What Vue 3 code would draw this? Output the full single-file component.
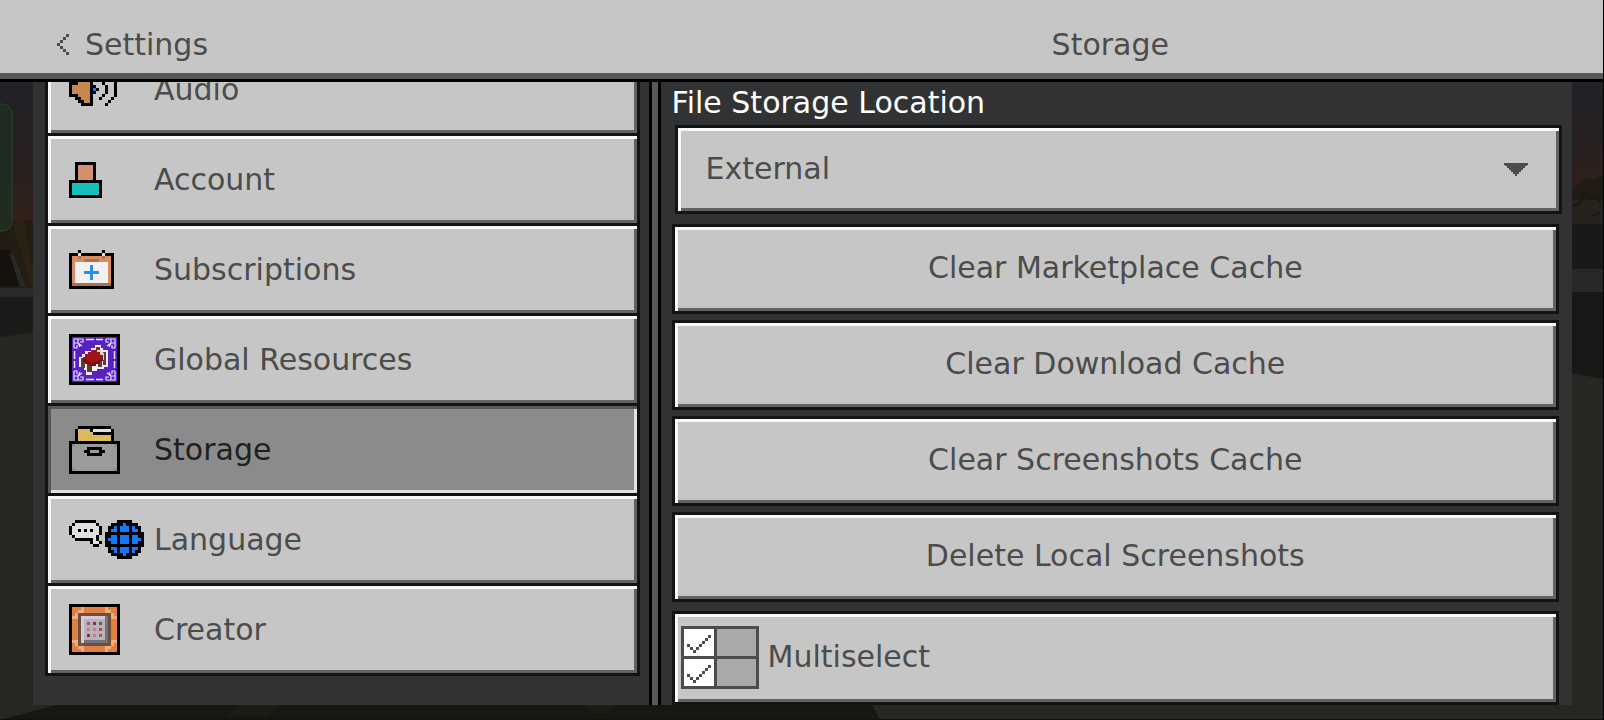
<script setup>
import { ref } from "vue";

const active = ref("Storage");
const location = ref("External");

// one letter per pixel, dots are transparent
const palette = {
  K: "#000000",
  W: "#f2f2f2",
  w: "#e0e0e0",
  S: "#d4906c",
  T: "#17bdbb",
  O: "#d88d62",
  o: "#b0714a",
  B: "#2a8fee",
  U: "#1778f5",
  C: "#c6884f",
  Y: "#dcb95f",
  G: "#9b9b9b",
  g: "#8b8b8b",
  R: "#df8042",
  L: "#efaa7d",
  N: "#6f4e3c",
  P: "#d3ccd6",
  p: "#b9b1bd",
  D: "#77717e",
  1: "#a35763",
  2: "#982a36",
  3: "#4b7235",
  4: "#b98f4f",
  5: "#c58284",
  6: "#c0444a",
  M: "#4c4c4c",
  F: "#ffffff",
  f: "#a9a9a9",
};

const icons = {
  Audio: [
    "....KKKK....K...",
    "...KKCCK.....K..",
    "..KKCCCK..K...K.",
    "KKKCCCCK...K...K",
    "KCCCCCCKK...K..K",
    "KCCCCCCKUK..K..K",
    "KCCCCCCKK...K..K",
    "KKKCCCCK...K...K",
    "..KKCCCK..K...K.",
    "...KKCCK.....K..",
    "....KKKK....K...",
  ],
  Account: [
    "..KKKKKKK..",
    "..KSSSSSK..",
    "..KSSSSSK..",
    "..KSSSSSK..",
    "..KSSSSSK..",
    "..KSSSSSK..",
    "KKKKKKKKKKK",
    "KTTTTTTTTTK",
    "KTTTTTTTTTK",
    "KTTTTTTTTTK",
    "KTTTTTTTTTK",
    "KKKKKKKKKKK",
  ],
  Subscriptions: [
    "...K.......K...",
    "KKKwKKKKKKKwKKK",
    "KOOoOOOOOOOoOOK",
    "KOOOOoooooOOOOK",
    "KOWWWWWWWWWWWOK",
    "KOWWWWWBWWWWWOK",
    "KOWWWWWBWWWWWOK",
    "KOWWWBBBBBWWWOK",
    "KOWWWWWBWWWWWOK",
    "KOWWWWWBWWWWWOK",
    "KOWWWWWWWWWWWOK",
    "KoooooooooooooK",
    "KKKKKKKKKKKKKKK",
  ],
  Storage: [
    "...KKKKKKKKKKK...",
    "..KYYYYKwwwwwwK..",
    "..KYYYYYKKKKKKK..",
    "..KYYYYYYYYYYYK..",
    "..KYYYYYYYYYYYK..",
    "KKKKKKKKKKKKKKKKK",
    "KgGGGGGGGGGGGGGgK",
    "KGGGGGKKKKKGGGGGK",
    "KGGGGKKGGGKKGGGGK",
    "KGGGGGKKKKKGGGGGK",
    "KGGGGGGGGGGGGGGGK",
    "KGGGGGGGGGGGGGGGK",
    "KGGGGGGGGGGGGGGGK",
    "KGGGGGGGGGGGGGGGK",
    "KgGGGGGGGGGGGGGgK",
    "KKKKKKKKKKKKKKKKK",
  ],
  Language: [
    "..KKKKKKK.......KKKKK....",
    ".KwwwwwwwK....KKKKUKKKK..",
    "KwwwwwwwwwK..KKUKUUUKUKK.",
    "KwwKwKwKwwK..KUUKUUUKUUK.",
    "KwwwwwwwwwK.KKKKKKKKKKKKK",
    ".KwwwwwwwK..KKUUKUUUKUUKK",
    "..KKKKKKwK..KUUUKUUUKUUUK",
    ".......KwwK.KKUUKUUUKUUKK",
    "........KK..KKKKKKKKKKKKK",
    ".............KUUKUUUKUUK.",
    ".............KKUKUUUKUKK.",
    "..............KKKKUKKKK..",
    "................KKKKK....",
  ],
  Creator: [
    "KKKKKKKKKKKKKKKKK",
    "KRRRLRRRRRRRLRRRK",
    "KRRLLRRRRRRRLLRRK",
    "KRLNNNNNNNNNNNLRK",
    "KLLNPPPPPPPPDNLLK",
    "KRRNPpppppppDNRRK",
    "KRRNPp1p2p3pDNRRK",
    "KRRNPpppppppDNRRK",
    "KRRNPp4p5p6pDNRRK",
    "KRRNPpppppppDNRRK",
    "KRRNPp2p5p1pDNRRK",
    "KRRNPpppppppDNRRK",
    "KLLNPDDDDDDDDNLLK",
    "KRLNNNNNNNNNNNLRK",
    "KRRLLRRRRRRRLLRRK",
    "KRRRLRRRRRRRLRRRK",
    "KKKKKKKKKKKKKKKKK",
  ],
  Multiselect: [
    "MMMMMMMMMMMMMMMMMMMMMMMMMM",
    "MFFFFFFFFFFMfffffffffffffM",
    "MFFFFFFFFFFMfffffffffffffM",
    "MFFFFFFFFMFMfffffffffffffM",
    "MFFFFFFFMFFMfffffffffffffM",
    "MFFFFFFMFFFMfffffffffffffM",
    "MFMFFFMFFFFMfffffffffffffM",
    "MFFMFMFFFFFMfffffffffffffM",
    "MFFFMFFFFFFMfffffffffffffM",
    "MFFFFFFFFFFMfffffffffffffM",
    "MMMMMMMMMMMMMMMMMMMMMMMMMM",
    "MFFFFFFFFFFMfffffffffffffM",
    "MFFFFFFFFFFMfffffffffffffM",
    "MFFFFFFFFMFMfffffffffffffM",
    "MFFFFFFFMFFMfffffffffffffM",
    "MFFFFFFMFFFMfffffffffffffM",
    "MFMFFFMFFFFMfffffffffffffM",
    "MFFMFMFFFFFMfffffffffffffM",
    "MFFFMFFFFFFMfffffffffffffM",
    "MFFFFFFFFFFMfffffffffffffM",
    "MMMMMMMMMMMMMMMMMMMMMMMMMM",
  ],
  Back: ["...M", "..M.", ".M..", "M...", ".M..", "..M.", "...M"],
};

const sections = ["Audio", "Account", "Subscriptions", "Global Resources", "Storage", "Language", "Creator"];
const actions = [
  "Clear Marketplace Cache",
  "Clear Download Cache",
  "Clear Screenshots Cache",
  "Delete Local Screenshots",
];

// joins neighbouring pixels of the same colour into one rect
function pixels(name) {
  const rects = [];
  icons[name].forEach((row, y) => {
    let x = 0;
    while (x < row.length) {
      let end = x + 1;
      while (row[end] === row[x]) end++;
      if (row[x] !== ".") {
        rects.push({ x, y, width: end - x, height: 1, fill: palette[row[x]] });
      }
      x = end;
    }
  });
  return rects;
}

function iconSize(name) {
  const w = icons[name][0].length;
  const h = icons[name].length;
  return { width: w * 3, height: h * 3, viewBox: `0 0 ${w} ${h}` };
}
</script>

<template>
  <div class="screen">
    <svg class="backdrop" viewBox="0 0 1604 720" preserveAspectRatio="none" aria-hidden="true">
      <defs>
        <linearGradient id="sky" x1="0" y1="0" x2="0" y2="1">
          <stop offset="0" stop-color="#222227" />
          <stop offset="0.5" stop-color="#272021" />
          <stop offset="1" stop-color="#32201a" />
        </linearGradient>
      </defs>
      <rect width="1604" height="720" fill="#282623" />
      <rect y="80" width="800" height="142" fill="url(#sky)" />
      <rect y="220" width="60" height="68" fill="#221c12" />
      <path d="M12 220h12l12 66h-6z" fill="#2b2112" />
      <path d="M0 250h10l12 36H0z" fill="#15120e" />
      <path d="M9 253l5 2 12 32h-6z" fill="#29292a" />
      <rect y="288" width="60" height="10" fill="#2b2a28" />
      <path d="M0 297h60v32L0 337z" fill="#1b1b19" />
      <rect x="-12" y="104" width="24" height="127" rx="10" fill="#1f2a21" stroke="#25472c" />
      <rect x="1500" y="80" width="104" height="120" fill="url(#sky)" />
      <path d="M1570 190l10-8 6-4 8 2 10-6v50h-34z" fill="#211b15" />
      <rect x="1570" y="200" width="34" height="24" fill="#26231e" />
      <path d="M1572 206l8-2 4-12 6 8 6-4 4 6M1592 216l8-3" fill="none" stroke="#1b1712" stroke-width="2" />
      <rect x="1500" y="224" width="104" height="45" fill="#1a1918" />
      <rect x="1500" y="269" width="104" height="23" fill="#2a2826" />
      <path d="M1500 292h104v87l-34-6h-70z" fill="#191816" />
      <path d="M60 704h812l8 16H0z" fill="#151810" />
      <path d="M240 704h40l-12 12h-40zM580 704h40l-20 10z" fill="#1a1d12" />
      <rect y="719" width="1604" height="1" fill="#170e10" />
      <rect x="1603" width="1" height="720" fill="#000000" />
    </svg>

    <header class="header">
      <button class="back" type="button">
        <svg v-bind="iconSize('Back')" shape-rendering="crispEdges" aria-hidden="true">
          <rect v-for="(p, i) in pixels('Back')" :key="i" v-bind="p" />
        </svg>
        <span>Settings</span>
      </button>
      <h1 class="title">Storage</h1>
    </header>

    <main class="body">
      <nav class="sidebar">
        <ul class="sections">
          <li v-for="name in sections" :key="name">
            <button
              class="section"
              :class="{ selected: name === active }"
              type="button"
              :aria-current="name === active ? 'page' : undefined"
              @click="active = name"
            >
              <span class="icon">
                <svg v-if="name === 'Global Resources'" width="51" height="51" viewBox="0 0 51 51" aria-hidden="true">
                  <rect width="51" height="51" fill="#000000" />
                  <rect x="3" y="3" width="45" height="45" fill="#5722bd" />
                  <path
                    d="M17 5.5h8M27 5.5h7M17 45.5h8M27 45.5h7M5.5 17v8M5.5 27v7M45.5 17v8M45.5 27v7"
                    stroke="#e9ddff"
                    stroke-width="1.5"
                  />
                  <g fill="none" stroke="#e9ddff" stroke-width="1.2">
                    <path id="corner" d="M14 5H5v9M5 9h4V5M9 9l4 3M9 9l2 4M14 5v3h-3M5 14h3v-3" />
                    <use href="#corner" transform="matrix(-1 0 0 1 51 0)" />
                    <use href="#corner" transform="matrix(1 0 0 -1 0 51)" />
                    <use href="#corner" transform="matrix(-1 0 0 -1 51 51)" />
                  </g>
                  <path
                    d="M10 23h3v-3h3v-3h6v-3h4v-3h6v3h2v2h5v17h-4v2h-7v2h-5v4h-6v-5h-2v-3h-5z"
                    fill="#f3eafa"
                  />
                  <path d="M12 24h4v10h-4zM18 29h5v9h-5zM34 18h3v13h-3zM27 13h4v4h-4zM29 27h4v6h-4z" fill="#5a4128" />
                  <path d="M27 16h5v3h3v7h-3v-4h-5z" fill="#d8cfc4" />
                  <path d="M14 23h2v-3h3v-2h3v-2h6v2h3v3h3v5h-2v2h-4v2h-4v2h-5v-2h-3v-3h-2z" fill="#a31216" />
                  <path d="M14 25h3v2h3v2h5v-1h4v-2h3v-2h2v3h-3v3h-4v2h-6v-2h-4v-2h-3z" fill="#760d12" />
                </svg>
                <svg v-else v-bind="iconSize(name)" shape-rendering="crispEdges" aria-hidden="true">
                  <rect v-for="(p, i) in pixels(name)" :key="i" v-bind="p" />
                </svg>
              </span>
              <span>{{ name }}</span>
            </button>
          </li>
        </ul>
      </nav>

      <section class="content">
        <label class="field-label" for="storage-location">File Storage Location</label>
        <div class="field">
          <select id="storage-location" v-model="location" class="select">
            <option>External</option>
            <option>Application</option>
          </select>
          <svg class="arrow" width="24" height="14" viewBox="0 0 24 14" aria-hidden="true">
            <path d="M0 0h24v2h-1v1h-2v2h-2v2h-2v2h-2v2h-2v2h-2v-2H9V9H7V7H5V5H3V3H1V2H0z" fill="#4c4c4c" />
          </svg>
        </div>

        <div class="actions">
          <button v-for="action in actions" :key="action" class="action" type="button">{{ action }}</button>
        </div>

        <button class="action multiselect" type="button">
          <svg v-bind="iconSize('Multiselect')" shape-rendering="crispEdges" aria-hidden="true">
            <rect v-for="(p, i) in pixels('Multiselect')" :key="i" v-bind="p" />
          </svg>
          <span>Multiselect</span>
        </button>
      </section>
    </main>
  </div>
</template>

<style>
body {
  margin: 0;
  background: #282623;
}
</style>

<style scoped>
.screen {
  position: relative;
  display: flex;
  flex-direction: column;
  box-sizing: border-box;
  min-height: 100vh;
  padding-bottom: 15px;
  overflow: hidden;
  color: #4c4c4c;
  font-family: "DejaVu Sans", sans-serif;
  font-size: 30px;
  line-height: 36px;
}

.backdrop {
  position: absolute;
  inset: 0;
  z-index: -1;
  width: 100%;
  height: 100%;
}

button,
select {
  margin: 0;
  color: inherit;
  font: inherit;
  border-radius: 0;
  cursor: pointer;
}

/* header */
.header {
  display: grid;
  grid-template-columns: 2fr 3fr;
  align-items: center;
  box-sizing: border-box;
  height: 82px;
  margin-right: 1px;
  padding: 10px 31px 0 33px;
  background: #c6c6c6;
  border-bottom: 3px solid #000000;
  box-shadow: inset 0 -6px #58585a;
}

.back {
  display: flex;
  align-items: center;
  justify-self: start;
  gap: 16px;
  padding: 0 0 0 24px;
  background: none;
  border: 0;
}

.title {
  margin: 0;
  font-size: 30px;
  font-weight: 400;
  text-align: center;
}

/* panels */
.body {
  display: grid;
  flex: 1;
  grid-template-columns: 2fr 3fr;
  margin: 0 32px 0 33px;
  background: #313233;
}

.sidebar {
  padding: 0 9px 29px 12px;
  overflow: hidden;
}

.sections {
  margin: -36px 0 0;
  padding: 0;
  list-style: none;
  border: solid #131313;
  border-width: 0 3px;
}

.section {
  display: flex;
  align-items: center;
  width: 100%;
  height: 90px;
  padding: 0 21px;
  text-align: left;
  background: #c6c6c6;
  border: 0;
  border-bottom: 3px solid #131313;
  box-shadow: inset 3px 3px #f7f7f7, inset -3px -3px #626262;
}

.section.selected {
  color: #1f1f1f;
  background: #8b8b8b;
  box-shadow: inset 3px 3px #585858, inset -3px -3px #e3e3e3;
}

.icon {
  display: flex;
  flex: none;
  width: 85px;
}

.content {
  padding: 3px 13px 0 11px;
  border-left: 12px solid;
  border-image: linear-gradient(to right, #000000 0 3px, #58585a 3px 9px, #000000 9px) 0 0 0 12;
}

.field-label {
  display: block;
  margin-bottom: 4px;
  color: #ffffff;
}

.field {
  display: grid;
  align-items: center;
  margin: 0 -3px 10px 3px;
}

.select,
.arrow {
  grid-area: 1 / 1;
}

.select {
  width: 100%;
  height: 89px;
  padding: 0 80px 2px 28px;
  appearance: none;
  background: #c6c6c6;
  border: 3px solid #131313;
  box-shadow: inset 3px 3px #f7f7f7, inset -3px -3px #626262;
}

.arrow {
  justify-self: end;
  margin-right: 34px;
  pointer-events: none;
}

.actions {
  display: grid;
  gap: 6px;
  margin-bottom: 9px;
}

.action {
  width: 100%;
  height: 90px;
  padding: 0 6px 2px;
  background: #c6c6c6;
  border: 3px solid #131313;
  box-shadow: inset 3px 3px #f7f7f7, inset -3px -3px #626262;
}

.multiselect {
  display: flex;
  align-items: center;
  gap: 9px;
  height: 94px;
}
</style>
